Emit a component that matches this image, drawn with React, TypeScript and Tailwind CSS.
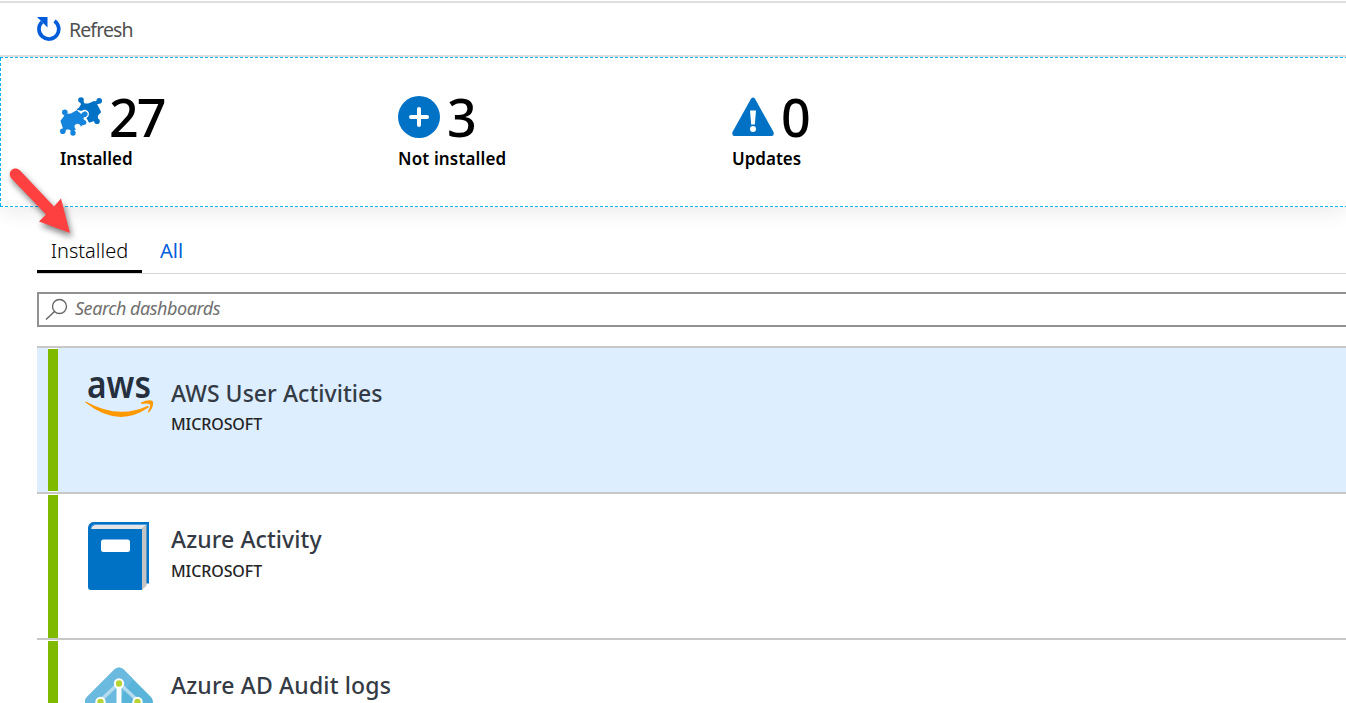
import type { ReactNode } from 'react';

const PuzzleIcon = () => (
  <svg width="42" height="42" viewBox="0 0 42 42" className="block" strokeLinejoin="round" strokeLinecap="round">
    <g fill="#0072c6" stroke="#0072c6">
      <path d="M22 8.500L28.500 8.500L34.500 6L37 10L40 16L37 19L37 23L29.500 25.500L27.500 22L27.500 17L24 14L18 13.500L20 12Z" strokeWidth="2" />
      <path d="M21.500 5.500L24 10M39 5.500L34 8M37 24.500L34 21" strokeWidth="3.500" />
      <g stroke="none"><circle cx="21" cy="4" r="2.800" /><circle cx="39.300" cy="4.900" r="2.800" /><circle cx="37" cy="25.300" r="2.800" /></g>
    </g>
    <g fill="#1584dc" stroke="#1584dc">
      <path d="M6 19L11 18.500L17 15L20 18.500L23 19L22.500 23L24.500 27L20.500 29.500L13 34L9 32.500L4 32.500L1.500 25Z" strokeWidth="2" />
      <path d="M5 17.500L8 22M3 35L7 30M13 36L11 31M22 20L25 18" strokeWidth="3.500" />
      <g stroke="none"><circle cx="4.800" cy="16.300" r="2.800" /><circle cx="2.800" cy="35.300" r="2.800" /><circle cx="13" cy="37" r="2.700" /><circle cx="24.500" cy="18.500" r="2.800" /><circle cx="24" cy="26.500" r="2.400" /></g>
    </g>
    <path d="M18 14.500Q20.500 17 22 15.500Q25.500 13 28 16.500Q29 20 26 21.500Q24.500 23 27 25" fill="none" stroke="#fff" strokeWidth="1.300" />
    <path d="M16.500 34Q13 30.500 15.500 28.500Q18.500 26.500 20.500 29.500L20.500 32Z" fill="#fff" />
  </svg>
);

const PlusIcon = () => (
  <svg width="42" height="42" viewBox="0 0 42 42" className="block">
    <circle cx="21" cy="21" r="21" fill="#0072c6" />
    <path d="M21 13v16M13 21h16" stroke="#fff" strokeWidth="4" strokeLinecap="round" />
  </svg>
);

const WarningIcon = () => (
  <svg width="42" height="42" viewBox="0 0 42 42" className="block">
    <path d="M19 2.800Q21 0 23 2.800L41.500 36Q42.500 40 39.500 40H2.500Q-.5 40 .5 36Z" fill="#0072c6" />
    <path d="M18 14.500h6l-1.200 14h-3.600z" fill="#fff" /><circle cx="21" cy="33" r="3" fill="#fff" />
  </svg>
);

const AwsIcon = () => (
  <svg width="70" height="54" viewBox="0 -8 70 54" className="-mt-[8px] ml-px block overflow-visible">
    <text x="2" y="24.500" textLength="64" lengthAdjust="spacingAndGlyphs" fontFamily="Noto Sans, sans-serif" fontWeight="560" fontSize="37" fill="#252f3e">aws</text>
    <path d="M.8 28.500Q33 46.500 62.500 33Q64.500 32.500 63.500 34.500Q33 55.500 .4 29.500Q0 28.500 .8 28.500Z" fill="#ff9900" />
    <path d="M56 29.500Q65 25.500 68 28.500Q69 34 63.800 39.500Q62.500 40 63.200 38Q66 32.500 65 31.500Q63 30 56.500 31Z" fill="#ff9900" />
  </svg>
);

const BookIcon = () => (
  <svg width="70" height="70" viewBox="0 0 70 70" className="mt-[2px] ml-[2px] block">
    <path d="M2 6.500Q3 1 8 1H63V62.500H56V69H5Q2 69 2 66Z" fill="#0072c6" />
    <path d="M5 8Q6 3.500 11 3.500H61L56 8Z" fill="#e5e5e5" />
    <path d="M56 8L60.500 3.500V64.500L56 69Z" fill="#c4c4c4" />
    <path d="M5 7.600Q5.500 3.500 10 3.500H61" stroke="#49a1df" fill="none" />
    <rect x="15" y="18.500" width="29" height="12.500" rx="2.500" fill="#fff" />
  </svg>
);

const DirectoryIcon = () => (
  <svg width="70" height="70" viewBox="0 0 70 70" className="mt-[2px] block">
    <path d="M31 2Q35-1 39 2L67 30Q71 35 67 38L39 66Q35 70 31 66L3 38Q-1 34 3 30Z" fill="#59b4d9" />
    <path d="M31 2Q35-1 39 2L49 12L20 55L3 38Q-1 34 3 30Z" fill="#69bade" />
    <path d="M35 16L16 34M35 16L54 34" stroke="#b5dcee" strokeWidth="3.500" />
    <path d="M35 16V58" stroke="#fff" strokeWidth="5" />
    <g fill="#b8d432" stroke="#fff" strokeWidth="2"><circle cx="35" cy="16.500" r="4.200" /><circle cx="16.500" cy="35" r="4.200" /><circle cx="53.500" cy="35" r="4.200" /></g>
  </svg>
);

const Stat = ({ icon, value, label, width, valueClass = '', labelClass = '' }: { icon: ReactNode; value: string; label: string; width: string; valueClass?: string; labelClass?: string }) => (
  <div className={`${width} shrink-0`}>
    <div className="flex h-[52px] items-center gap-[8px]">
      {icon}
      <span className={`text-[52px] leading-[52px] font-medium ${valueClass}`}>{value}</span>
    </div>
    <div className={`mt-[4px] text-[17px] leading-6 font-semibold whitespace-nowrap ${labelClass}`}>{label}</div>
  </div>
);

const Row = ({ icon, title, publisher, height = 'h-[146px]', titleClass, publisherClass = '', selected = false }: { icon: ReactNode; title: string; publisher?: string; height?: string; titleClass: string; publisherClass?: string; selected?: boolean }) => (
  <div className={`flex border-t-2 border-[#c8c8c8] pl-[11px] ${height} ${selected ? 'bg-[#dceeff]' : 'bg-white'}`}>
    <div className={`w-[10px] shrink-0 border-t border-white bg-[#7fba00] ${selected ? 'border-b' : ''}`} />
    <div className="mt-[25px] ml-[26px] w-[70px] shrink-0">{icon}</div>
    <div className="ml-[17px] pt-[29px]">
      <div className={`w-max text-[23px] leading-8 font-medium text-[#343b45] ${titleClass}`}>{title}</div>
      {publisher && <div className={`text-[16px] leading-6 font-medium tracking-[-0.1px] text-[#252525] ${publisherClass}`}>{publisher}</div>}
    </div>
  </div>
);

export default function App() {
  return (
    <div className="h-[703px] overflow-hidden bg-white font-['Noto_Sans',sans-serif] text-black">
      <header className="relative z-10 mt-px flex h-[56px] items-center border-t-2 border-b-2 border-t-[#dedede] border-b-[#dedede] bg-white pl-[37px]">
        <svg width="24" height="25" viewBox="0 0 24 25" className="block">
          <path d="M17.500 4A9.900 9.900 0 1 1 5 5" stroke="#015cda" strokeWidth="3.700" fill="none" />
          <path d="M0 0H10.500V10.500Z" fill="#015cda" />
        </svg>
        <span className="mt-[2px] ml-[8px] text-[19.5px] tracking-[-0.9px] text-[#505050]">Refresh</span>
      </header>
      <section className="relative h-[150px] shadow-[0_4px_20px_rgba(0,0,0,0.09)]">
        <div className="h-px bg-[repeating-linear-gradient(90deg,#00b4f0_0_3px,#fff_3px_5px)]" />
        <div className="flex h-[148px]">
          <div className="w-px shrink-0 bg-[repeating-linear-gradient(180deg,#00b4f0_0_3px,#fff_3px_5px)]" />
          <div className="flex pt-[33px] pl-[59px]">
            <Stat icon={<PuzzleIcon />} value="27" label="Installed" width="w-[338px]" valueClass="-ml-px tracking-[-2px]" />
            <Stat icon={<PlusIcon />} value="3" label="Not installed" width="w-[334px]" valueClass="-ml-px" labelClass="tracking-[0.15px]" />
            <Stat icon={<WarningIcon />} value="0" label="Updates" width="w-[200px]" valueClass="-ml-px" />
          </div>
        </div>
        <div className="h-px bg-[repeating-linear-gradient(90deg,#00b4f0_0_3px,#fff_3px_5px)]" />
        <svg width="85" height="85" viewBox="0 0 85 85" className="absolute top-[107px] left-0 z-10 drop-shadow-[2px_4px_3px_rgba(0,0,0,0.5)]">
          <path d="M11.300 14.300C6.500 8 14 1 20 6.500L54 42.500L61 34.500L70 69L39 57.500L46 50.500Z" fill="#ff4040" />
        </svg>
      </section>
      <main className="pl-[37px]">
        <nav className="mt-[23px] flex h-[44px] border-b border-[#d6d6d6]">
          <div className="h-[43px] w-[105px] border-b-3 border-black pt-[6px] text-center text-[20px] leading-[30px] font-[350]">Installed</div>
          <div className="ml-[18px] pt-[6px] text-[20px] leading-[30px] text-[#015cda]">All</div>
        </nav>
        <label className="mt-[18px] flex h-[35px] items-center border-2 border-r-0 border-[#919191] pl-[6px]">
          <svg width="24" height="24" viewBox="0 0 24 24" className="block" fill="none" stroke="#666" strokeWidth="1.400"><circle cx="14.500" cy="8.500" r="7" /><path d="M9.500 13.500L1 21.500" /></svg>
          <span className="mt-[-2px] ml-[6px] text-[18px] tracking-[-0.47px] text-[#707070] italic">Search dashboards</span>
        </label>
        <div className="mt-[19px]">
          <Row icon={<AwsIcon />} title="AWS User Activities" publisher="MICROSOFT" titleClass="tracking-[0.05px]" publisherClass="mt-[3px]" selected />
          <Row icon={<BookIcon />} title="Azure Activity" publisher="MICROSOFT" titleClass="tracking-[0.08px]" publisherClass="mt-[4px]" />
          <Row icon={<DirectoryIcon />} title="Azure AD Audit logs" height="h-[66px]" titleClass="tracking-[0.15px]" />
        </div>
      </main>
    </div>
  );
}
